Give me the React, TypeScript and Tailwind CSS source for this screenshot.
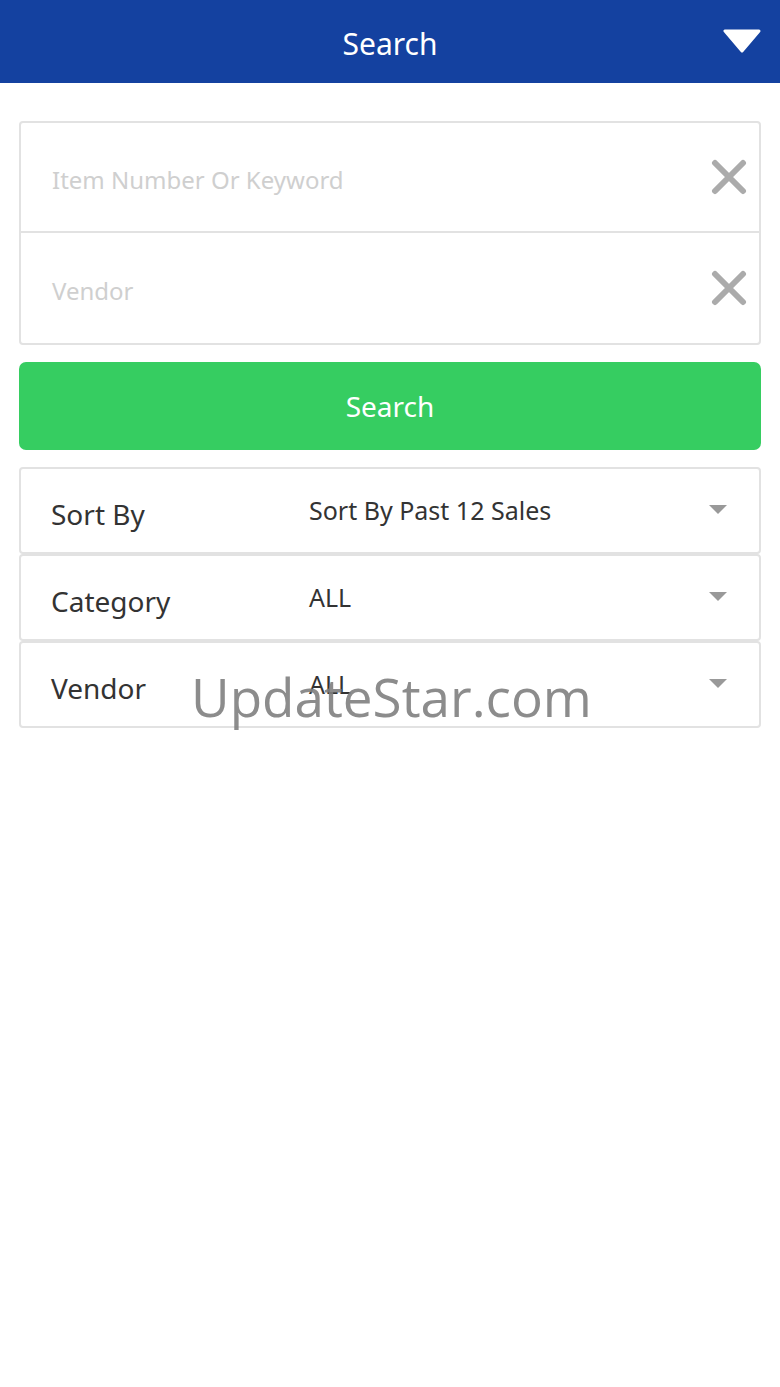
import { ReactNode } from "react"

function ClearIcon() {
  return (
    <svg width="36" height="36" viewBox="0 0 36 36" className="shrink-0">
      <path d="M4 4 L32 32 M32 4 L4 32" stroke="#ababab" strokeWidth="6" strokeLinecap="round" />
    </svg>
  )
}

function Caret() {
  return (
    <svg width="18" height="10" viewBox="0 0 18 10" className="shrink-0">
      <path d="M0 0 H18 L9 9 Z" fill="#999999" />
    </svg>
  )
}

function InputRow({ placeholder, last }: { placeholder: string; last?: boolean }) {
  return (
    <div className={`flex items-center h-[110px] pl-[31px] pr-[12px] ${last ? "" : "border-b-2 border-[#e2e2e2]"}`}>
      <span className="flex-1 text-[24px] text-[#cfcfcf] pt-[6px]">{placeholder}</span>
      <ClearIcon />
    </div>
  )
}

function SelectRow({ label, value, children }: { label: string; value: string; children?: ReactNode }) {
  return (
    <div className="relative flex items-center h-[87px] border-2 border-[#e2e2e2] rounded-[4px] pl-[30px] pr-[32px]">
      <span className="w-[258px] text-[28px] text-[#333333] pt-[6px]">{label}</span>
      <span className="flex-1 text-[25px] text-[#333333]">{value}</span>
      <div className="-mt-[2px]">
        <Caret />
      </div>
      {children}
    </div>
  )
}

export default function App() {
  return (
    <div className="relative w-[780px] h-[1387px] bg-white font-['Noto_Sans','Open_Sans',sans-serif]">
      <header className="relative flex items-center justify-center h-[83px] bg-[#1441a0]">
        <h1 className="text-[30px] text-white pt-[3px]">Search</h1>
        <svg width="38" height="24" viewBox="0 0 38 24" className="absolute right-[19px] top-[29px]">
          <path d="M2 2 H36 L19 22 Z" fill="white" stroke="white" strokeWidth="3" strokeLinejoin="round" />
        </svg>
      </header>

      <div className="px-[19px] pt-[38px]">
        <div className="border-2 border-[#e2e2e2] rounded-[4px]">
          <InputRow placeholder="Item Number Or Keyword" />
          <InputRow placeholder="Vendor" last />
        </div>

        <button className="mt-[17px] w-full h-[88px] rounded-[7px] bg-[#36cd61] text-white text-[28px]">
          Search
        </button>

        <div className="mt-[17px] flex flex-col">
          <SelectRow label="Sort By" value="Sort By Past 12 Sales" />
          <SelectRow label="Category" value="ALL" />
          <SelectRow label="Vendor" value="ALL" />
        </div>
      </div>

      <div className="absolute left-[191px] top-[657px] text-[53px] text-[#7f7f7f]/90 font-['Open_Sans',sans-serif] pointer-events-none">
        UpdateStar.com
      </div>
    </div>
  )
}
